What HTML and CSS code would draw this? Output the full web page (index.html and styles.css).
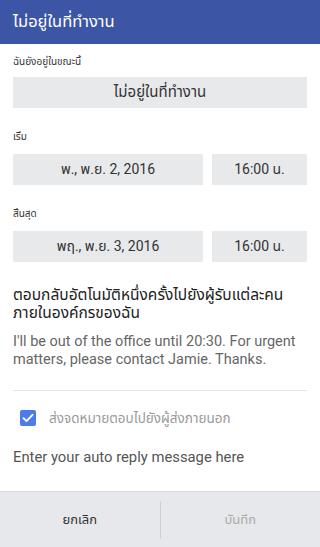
FILE: index.html
```html
<!DOCTYPE html>
<html lang="th">
<head>
<meta charset="utf-8">
<link rel="stylesheet" href="styles.css">
</head>
<body>
<div class="app">
  <header class="bar"><h1 class="title">ไม่อยู่ในที่ทำงาน</h1></header>
  <main class="content">
    <div class="label first">ฉันยังอยู่ในขณะนี้</div>
    <div class="field full">ไม่อยู่ในที่ทำงาน</div>

    <div class="label">เริ่ม</div>
    <div class="row">
      <div class="field date">พ., พ.ย. 2, 2016</div>
      <div class="field time">16:00 น.</div>
    </div>

    <div class="label">สิ้นสุด</div>
    <div class="row">
      <div class="field date">พฤ., พ.ย. 3, 2016</div>
      <div class="field time">16:00 น.</div>
    </div>

    <h2 class="heading">ตอบกลับอัตโนมัติหนึ่งครั้งไปยังผู้รับแต่ละคนภายในองค์กรของฉัน</h2>
    <p class="message">I'll be out of the office until 20:30. For urgent matters, please contact Jamie. Thanks.</p>
    <hr class="divider">
    <div class="check-row">
      <span class="checkbox">
        <svg viewBox="0 0 16 16" width="16" height="16"><path d="M3.5 8.2l3 3 6-6.4" fill="none" stroke="#fff" stroke-width="1.9" stroke-linecap="round" stroke-linejoin="round"/></svg>
      </span>
      <span class="check-label">ส่งจดหมายตอบไปยังผู้ส่งภายนอก</span>
    </div>
    <p class="placeholder">Enter your auto reply message here</p>
  </main>
  <footer class="footer">
    <button class="btn cancel">ยกเลิก</button>
    <span class="sep"></span>
    <button class="btn save">บันทึก</button>
  </footer>
</div>
</body>
</html>
```

FILE: styles.css
```css
* { box-sizing: border-box; }
html, body { margin: 0; padding: 0; }
body {
  width: 320px;
  height: 547px;
  overflow: hidden;
  background: #fff;
  font-family: Roboto, "Noto Sans", "Noto Sans Thai", sans-serif;
  color: #333;
}
.app {
  display: flex;
  flex-direction: column;
  height: 547px;
}
.bar {
  height: 44px;
  background: #3c55a5;
  display: flex;
  align-items: center;
  padding: 0 13px;
  flex-shrink: 0;
}
.title {
  margin: 0;
  font-size: 16.5px;
  font-weight: normal;
  color: #fff;
  line-height: 20px;
}
.content {
  flex: 1;
  padding: 0 13px;
  display: flex;
  flex-direction: column;
}
.label {
  font-size: 10px;
  color: #333;
  line-height: 14px;
  margin-top: 22px;
  margin-bottom: 10px;
}
.label.first {
  margin-top: 11px;
  margin-bottom: 8px;
}
.field {
  background: #e8e9ea;
  height: 31px;
  display: flex;
  align-items: center;
  justify-content: center;
  font-size: 14px;
  color: #333;
}
.full { font-size: 15px; }
.row {
  display: flex;
  gap: 9px;
}
.date { flex: 0 0 190px; }
.time { flex: 1; }
.heading {
  margin: 25px 0 0;
  font-size: 15.5px;
  font-weight: normal;
  line-height: 17.5px;
  color: #222;
}
.message {
  margin: 11px 0 0;
  font-size: 14.5px;
  line-height: 18px;
  color: #666;
}
.divider {
  border: 0;
  border-top: 1px solid #e4e4e4;
  margin: 21px 0 0;
}
.check-row {
  display: flex;
  align-items: center;
  margin-top: 19px;
  padding-left: 7px;
  gap: 13px;
}
.checkbox {
  width: 16px;
  height: 16px;
  border-radius: 2px;
  background: #4d7ce6;
  display: flex;
}
.check-label {
  font-size: 13.5px;
  color: #9a9a9a;
  line-height: 16px;
}
.placeholder {
  margin: 22px 0 0;
  font-size: 14.8px;
  line-height: 18px;
  color: #555;
}
.footer {
  height: 56px;
  flex-shrink: 0;
  background: #e7e8eb;
  border-top: 1px solid #d8d9dc;
  display: flex;
  align-items: center;
}
.btn {
  flex: 1;
  height: 100%;
  background: none;
  border: 0;
  font-family: inherit;
  font-size: 13px;
  padding: 0;
}
.cancel { color: #333; }
.save { color: #aaa; }
.sep {
  width: 1px;
  height: 38px;
  background: #cfd0d3;
}
```
